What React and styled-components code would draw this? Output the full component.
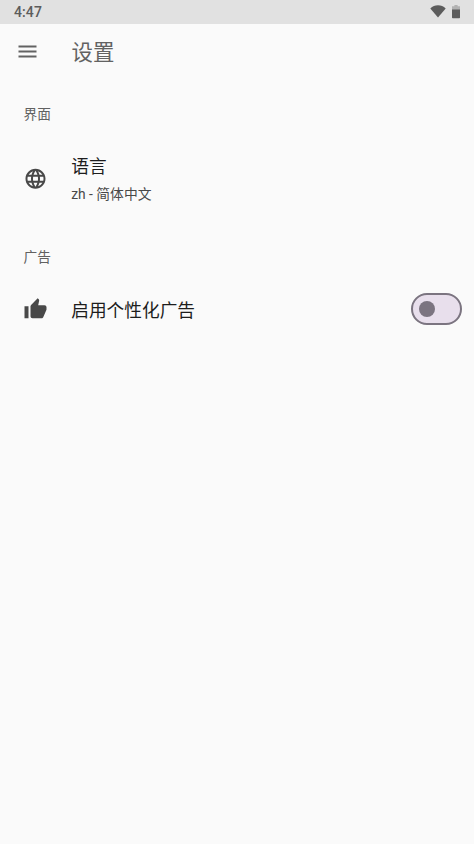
import React, { useState } from "react";
import styled, { createGlobalStyle } from "styled-components";
import { MdLanguage, MdMenu, MdThumbUp } from "react-icons/md";

const GlobalStyle = createGlobalStyle`
  * {
    box-sizing: border-box;
  }
  body {
    margin: 0;
    background: #fafafa;
    font-family: Roboto, "Noto Sans CJK SC", sans-serif;
  }
`;

const Screen = styled.div`
  min-height: 100vh;
  background: #fafafa;
`;

const StatusBar = styled.div`
  display: flex;
  align-items: center;
  justify-content: space-between;
  height: 24px;
  padding: 0 14px 0 14px;
  background: #e1e1e1;
  color: #5c5c5c;
`;

const Clock = styled.span`
  font-size: 14px;
  font-weight: 500;
  line-height: 24px;
  letter-spacing: 0.1px;
`;

const StatusIcons = styled.div`
  display: flex;
  align-items: center;
  gap: 6px;
  padding-bottom: 1px;

  svg {
    display: block;
  }
`;

const AppBar = styled.header`
  display: flex;
  align-items: center;
  height: 56px;
  padding-left: 15.5px;
  color: #626262;
`;

const MenuButton = styled.button`
  display: flex;
  width: 24px;
  height: 24px;
  margin: 0 32px 1px 0;
  padding: 0;
  border: none;
  background: none;
  color: inherit;
`;

const Title = styled.h1`
  margin: 2px 0 0;
  font-size: 21.4px;
  font-weight: 400;
  line-height: 30px;
`;

const SectionLabel = styled.h2`
  margin: 0;
  padding: ${(props) => props.$top}px 0 0 23.5px;
  color: #616161;
  font-size: 13.7px;
  font-weight: 400;
  line-height: 20px;
`;

const Row = styled.div`
  display: flex;
  align-items: center;
  height: ${(props) => props.$height}px;
  margin-top: ${(props) => props.$top}px;
  padding: 0 12px 0 23.5px;
  color: #484848;
`;

const RowIcon = styled.span`
  display: flex;
  flex: none;
  width: 24px;
  margin-right: 23.7px;

  svg {
    display: block;
    overflow: visible;
  }
`;

const RowText = styled.div`
  flex: 1;
  padding-top: ${(props) => props.$drop || 0}px;
  padding-bottom: ${(props) => props.$lift || 0}px;
`;

const RowTitle = styled.div`
  color: #1d1d1d;
  font-size: 17.7px;
  line-height: 28px;
`;

const RowSubtitle = styled.div`
  color: #484848;
  font-size: 13.8px;
  line-height: 20px;
  margin-top: 3px;
`;

const Track = styled.button`
  display: flex;
  align-items: center;
  justify-content: ${(props) => (props.$on ? "flex-end" : "flex-start")};
  width: 51px;
  height: 32px;
  padding: 0 6px 0 5.5px;
  border: 2px solid #7b7480;
  border-radius: 16px;
  background: #e8dfec;
`;

const Thumb = styled.span`
  width: 16px;
  height: 16px;
  border-radius: 50%;
  background: #7b7480;
`;

const App = () => {
  const [personalAds, setPersonalAds] = useState(false);

  return (
    <Screen>
      <GlobalStyle />
      <StatusBar>
        <Clock>4:47</Clock>
        <StatusIcons>
          <svg width="16" height="13" viewBox="0 0 16 13" fill="currentColor">
            <path d="M.3 3.500C2.500 1.300 5 .3 8 .3s5.500 1 7.700 3.200L8 12.500z" />
          </svg>
          <svg width="8" height="14" viewBox="0 0 8 14" fill="currentColor">
            <path opacity=".35" d="M2.400 0h3.200v1.300H8V5H0V1.300h2.400z" />
            <path d="M0 4.500h8V12.500a.8.8 0 0 1-.8.8H.8A.8.8 0 0 1 0 12.500z" />
          </svg>
        </StatusIcons>
      </StatusBar>

      <AppBar>
        <MenuButton aria-label="menu">
          <MdMenu size={24} viewBox="0.5 0.5 24 24" />
        </MenuButton>
        <Title>设置</Title>
      </AppBar>

      <SectionLabel $top={24}>界面</SectionLabel>
      <Row $top={20} $height={70}>
        <RowIcon>
          <MdLanguage size={24} viewBox="0.5 0.3 24 24" />
        </RowIcon>
        <RowText $lift={2}>
          <RowTitle>语言</RowTitle>
          <RowSubtitle>zh - 简体中文</RowSubtitle>
        </RowText>
      </Row>

      <SectionLabel $top={33}>广告</SectionLabel>
      <Row $top={14} $height={56}>
        <RowIcon>
          <MdThumbUp size={24} viewBox="0.5 -0.3 24 24" />
        </RowIcon>
        <RowText $drop={3}>
          <RowTitle>启用个性化广告</RowTitle>
        </RowText>
        <Track
          role="switch"
          aria-checked={personalAds}
          $on={personalAds}
          onClick={() => setPersonalAds(!personalAds)}
        >
          <Thumb />
        </Track>
      </Row>
    </Screen>
  );
};

export default App;
